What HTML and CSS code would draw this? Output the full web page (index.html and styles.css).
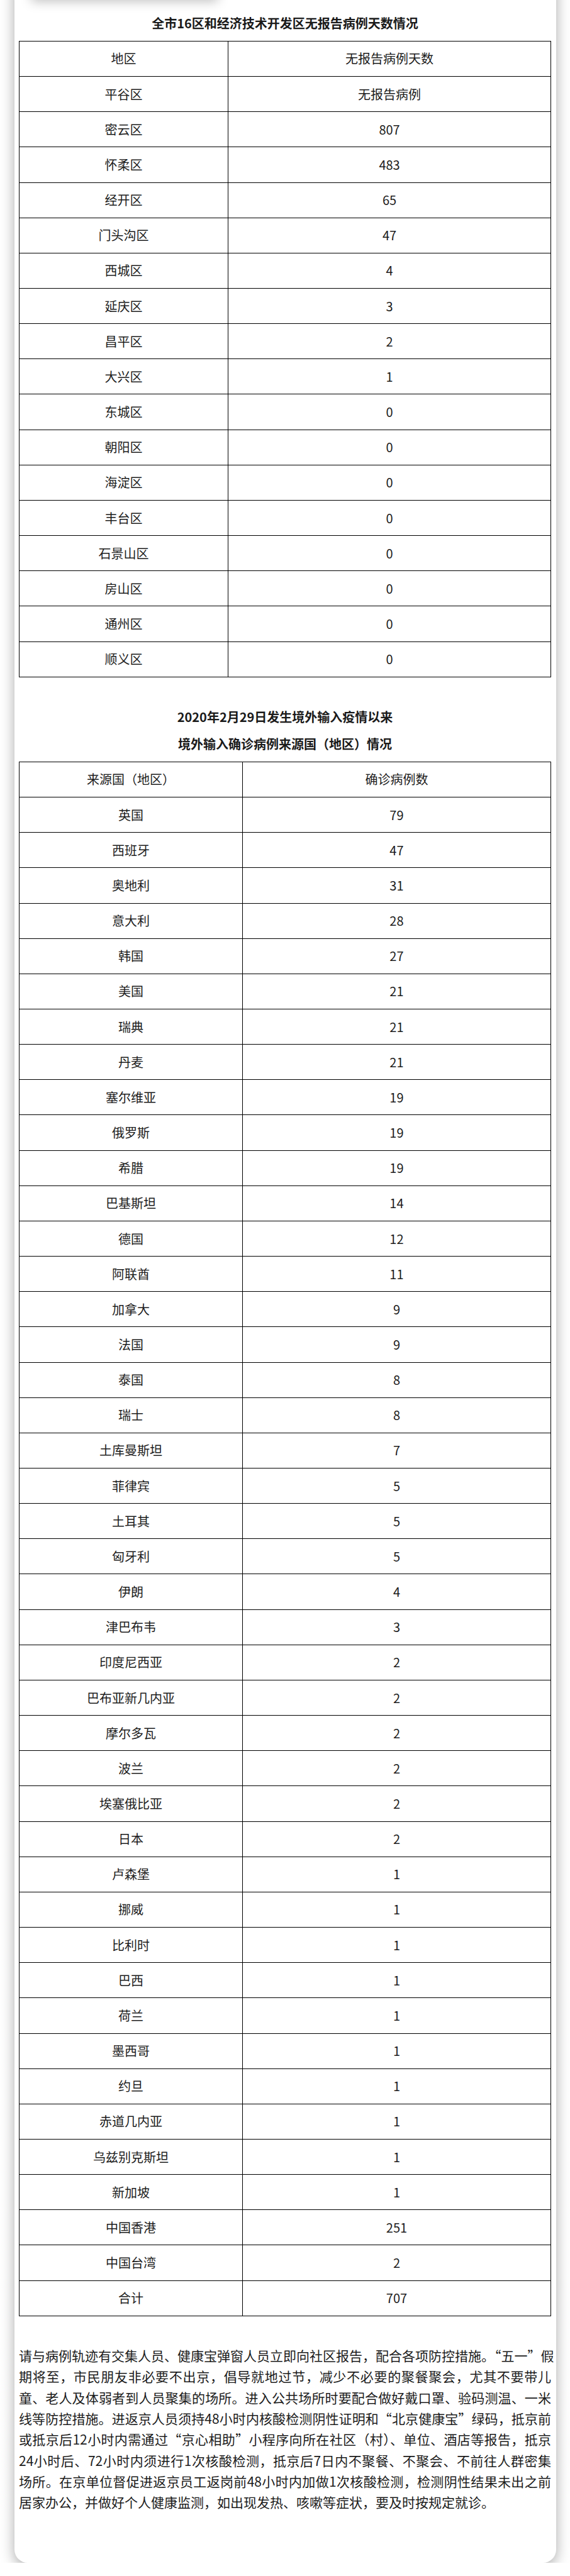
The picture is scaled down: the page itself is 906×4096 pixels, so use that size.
FILE: index.html
```html
<!DOCTYPE html>
<html lang="zh-CN">
<head>
<meta charset="utf-8">
<title>无报告病例天数情况</title>
<link rel="stylesheet" href="styles.css">
</head>
<body>
<main class="card">
  <div class="tab-shadow"></div>

  <h2 class="title title-first">全市16区和经济技术开发区无报告病例天数情况</h2>
  <table class="data data-districts">
    <colgroup><col class="c1"><col class="c2"></colgroup>
    <tbody>
      <tr><td>地区</td><td>无报告病例天数</td></tr>
      <tr><td>平谷区</td><td>无报告病例</td></tr>
      <tr><td>密云区</td><td>807</td></tr>
      <tr><td>怀柔区</td><td>483</td></tr>
      <tr><td>经开区</td><td>65</td></tr>
      <tr><td>门头沟区</td><td>47</td></tr>
      <tr><td>西城区</td><td>4</td></tr>
      <tr><td>延庆区</td><td>3</td></tr>
      <tr><td>昌平区</td><td>2</td></tr>
      <tr><td>大兴区</td><td>1</td></tr>
      <tr><td>东城区</td><td>0</td></tr>
      <tr><td>朝阳区</td><td>0</td></tr>
      <tr><td>海淀区</td><td>0</td></tr>
      <tr><td>丰台区</td><td>0</td></tr>
      <tr><td>石景山区</td><td>0</td></tr>
      <tr><td>房山区</td><td>0</td></tr>
      <tr><td>通州区</td><td>0</td></tr>
      <tr><td>顺义区</td><td>0</td></tr>
    </tbody>
  </table>

  <h2 class="title title-second">2020年2月29日发生境外输入疫情以来</h2>
  <h2 class="title title-third">境外输入确诊病例来源国（地区）情况</h2>
  <table class="data data-countries">
    <colgroup><col class="c1"><col class="c2"></colgroup>
    <tbody>
      <tr><td>来源国（地区）</td><td>确诊病例数</td></tr>
      <tr><td>英国</td><td>79</td></tr>
      <tr><td>西班牙</td><td>47</td></tr>
      <tr><td>奥地利</td><td>31</td></tr>
      <tr><td>意大利</td><td>28</td></tr>
      <tr><td>韩国</td><td>27</td></tr>
      <tr><td>美国</td><td>21</td></tr>
      <tr><td>瑞典</td><td>21</td></tr>
      <tr><td>丹麦</td><td>21</td></tr>
      <tr><td>塞尔维亚</td><td>19</td></tr>
      <tr><td>俄罗斯</td><td>19</td></tr>
      <tr><td>希腊</td><td>19</td></tr>
      <tr><td>巴基斯坦</td><td>14</td></tr>
      <tr><td>德国</td><td>12</td></tr>
      <tr><td>阿联酋</td><td>11</td></tr>
      <tr><td>加拿大</td><td>9</td></tr>
      <tr><td>法国</td><td>9</td></tr>
      <tr><td>泰国</td><td>8</td></tr>
      <tr><td>瑞士</td><td>8</td></tr>
      <tr><td>土库曼斯坦</td><td>7</td></tr>
      <tr><td>菲律宾</td><td>5</td></tr>
      <tr><td>土耳其</td><td>5</td></tr>
      <tr><td>匈牙利</td><td>5</td></tr>
      <tr><td>伊朗</td><td>4</td></tr>
      <tr><td>津巴布韦</td><td>3</td></tr>
      <tr><td>印度尼西亚</td><td>2</td></tr>
      <tr><td>巴布亚新几内亚</td><td>2</td></tr>
      <tr><td>摩尔多瓦</td><td>2</td></tr>
      <tr><td>波兰</td><td>2</td></tr>
      <tr><td>埃塞俄比亚</td><td>2</td></tr>
      <tr><td>日本</td><td>2</td></tr>
      <tr><td>卢森堡</td><td>1</td></tr>
      <tr><td>挪威</td><td>1</td></tr>
      <tr><td>比利时</td><td>1</td></tr>
      <tr><td>巴西</td><td>1</td></tr>
      <tr><td>荷兰</td><td>1</td></tr>
      <tr><td>墨西哥</td><td>1</td></tr>
      <tr><td>约旦</td><td>1</td></tr>
      <tr><td>赤道几内亚</td><td>1</td></tr>
      <tr><td>乌兹别克斯坦</td><td>1</td></tr>
      <tr><td>新加坡</td><td>1</td></tr>
      <tr><td>中国香港</td><td>251</td></tr>
      <tr><td>中国台湾</td><td>2</td></tr>
      <tr><td>合计</td><td>707</td></tr>
    </tbody>
  </table>

  <p class="notice">
    <span class="ln">请与病例轨迹有交集人员、健康宝弹窗人员立即向社区报告，配合各项防控措施。“五一”假</span>
    <span class="ln">期将至，市民朋友非必要不出京，倡导就地过节，减少不必要的聚餐聚会，尤其不要带儿</span>
    <span class="ln">童、老人及体弱者到人员聚集的场所。进入公共场所时要配合做好戴口罩、验码测温、一米</span>
    <span class="ln">线等防控措施。进返京人员须持48小时内核酸检测阴性证明和“北京健康宝”绿码，抵京前</span>
    <span class="ln">或抵京后12小时内需通过“京心相助”小程序向所在社区（村）、单位、酒店等报告，抵京</span>
    <span class="ln">24小时后、72小时内须进行1次核酸检测，抵京后7日内不聚餐、不聚会、不前往人群密集</span>
    <span class="ln">场所。在京单位督促进返京员工返岗前48小时内加做1次核酸检测，检测阴性结果未出之前</span>
    <span class="ln ln-last">居家办公，并做好个人健康监测，如出现发热、咳嗽等症状，要及时按规定就诊。</span>
  </p>
</main>
</body>
</html>
```

FILE: styles.css
```css
html, body {
  margin: 0;
  padding: 0;
  background: #ffffff;
}

body {
  font-family: "Noto Sans CJK SC", "Noto Sans", sans-serif;
  color: #1c1c1c;
  overflow: hidden;
}

.card {
  display: block;
  margin: -30px 22.5px 0;
  padding: 0 7.5px 79px;
  background: #ffffff;
  border-radius: 0 0 21px 21px;
  box-shadow: 0 6px 22px rgba(0, 0, 0, 0.34);
}

.tab-shadow {
  height: 30px;
  width: 296px;
  margin-left: 20px;
  background: #ffffff;
  box-shadow: 0 2px 18px rgba(0, 0, 0, 0.26);
}

.title {
  margin: 0;
  font-size: 20px;
  line-height: 28px;
  font-weight: 700;
  text-align: center;
  color: #1a1a1a;
}

.title-first {
  margin-top: 23.4px;
  margin-bottom: 13.5px;
}

.title-second {
  margin-top: 49px;
}

.title-third {
  margin-top: 15.7px;
  margin-bottom: 13.5px;
}

.data {
  width: 100%;
  border-collapse: collapse;
  table-layout: fixed;
}

.data-districts .c1 { width: 39.3%; }
.data-districts .c2 { width: 60.7%; }
.data-countries .c1 { width: 42%; }
.data-countries .c2 { width: 58%; }

.data td {
  border: 1px solid #000000;
  height: 55.16px;
  padding: 0;
  text-align: center;
  vertical-align: middle;
  font-size: 20px;
  line-height: 28px;
  color: #1c1c1c;
}

.notice {
  margin: 46.4px 0 0;
  font-size: 21px;
  line-height: 33.3px;
  color: #1c1c1c;
}

.ln {
  display: block;
  white-space: nowrap;
  text-align: justify;
  text-align-last: justify;
}

.ln-last {
  text-align: left;
  text-align-last: left;
}
```
